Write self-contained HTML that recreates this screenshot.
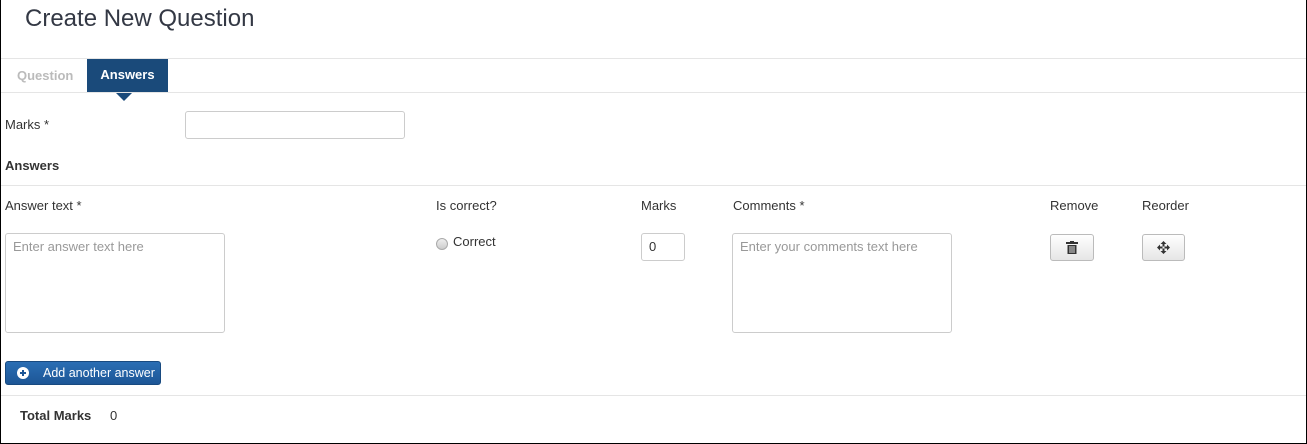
<!DOCTYPE html>
<html><head><style>
*{box-sizing:border-box;margin:0;padding:0}
body{width:1307px;height:444px;overflow:hidden;font-family:"Liberation Sans",sans-serif;color:#333;background:#fff}
.frame{position:absolute;left:0;top:0;width:1307px;height:444px;border:1px solid #000;border-top:none}
.a{position:absolute}
.hr{position:absolute;left:1px;right:1px;height:1px;background:#e5e5e5}
.t{font-size:13px}
.inp{position:absolute;border:1px solid #ccc;border-radius:3px;background:#fff}
.ph{color:#999;font-size:13px;position:absolute;left:7px;top:5px}
.btn{position:absolute;border:1px solid #bbb;border-radius:3px;background:linear-gradient(#fff,#e6e6e6);height:27px}
</style></head><body>
<div class="frame"></div>
<div class="a" style="left:25px;top:5px;font-size:24px;color:#333844">Create New Question</div>
<div class="hr" style="top:58px"></div>
<div class="a" style="left:17px;top:68px;font-size:13px;font-weight:bold;color:#bbb">Question</div>
<div class="a" style="left:87px;top:59px;width:81px;height:34px;background:#1a4a7a;color:#fff;font-weight:bold;font-size:13px;text-align:center;line-height:32px">Answers</div>
<div class="a" style="left:116px;top:93px;width:0;height:0;border-left:8px solid transparent;border-right:8px solid transparent;border-top:8px solid #1a4a7a"></div>
<div class="hr" style="top:92px"></div>
<div class="a t" style="left:5px;top:117px">Marks *</div>
<div class="inp" style="left:185px;top:111px;width:220px;height:28px"></div>
<div class="a t" style="left:5px;top:158px;font-weight:bold">Answers</div>
<div class="hr" style="top:185px"></div>
<div class="a t" style="left:5px;top:198px">Answer text *</div>
<div class="a t" style="left:436px;top:198px">Is correct?</div>
<div class="a t" style="left:641px;top:198px">Marks</div>
<div class="a t" style="left:733px;top:198px">Comments *</div>
<div class="a t" style="left:1050px;top:198px">Remove</div>
<div class="a t" style="left:1142px;top:198px">Reorder</div>
<div class="inp" style="left:5px;top:233px;width:220px;height:100px"><span class="ph">Enter answer text here</span></div>
<div class="a" style="left:436px;top:238px;width:12px;height:12px;border:1px solid #aaa;border-radius:50%;background:linear-gradient(#eee,#ccc)"></div>
<div class="a t" style="left:453px;top:234px">Correct</div>
<div class="inp" style="left:641px;top:233px;width:44px;height:28px"><span class="ph" style="color:#333;left:7px">0</span></div>
<div class="inp" style="left:732px;top:233px;width:220px;height:100px"><span class="ph">Enter your comments text here</span></div>
<div class="btn" style="left:1050px;top:234px;width:44px">
<svg class="a" style="left:15px;top:6px" width="12" height="13" viewBox="0 0 12 13"><rect x="0" y="1" width="12" height="2" fill="#333"/><rect x="4" y="0" width="4" height="2" fill="#333"/><path d="M1.5 4h9v9h-9z" fill="#333"/><path d="M4 5v7M6 5v7M8 5v7" stroke="#ddd" stroke-width="1"/></svg></div>
<div class="btn" style="left:1142px;top:234px;width:43px">
<svg class="a" style="left:14px;top:6px" width="13" height="13" viewBox="0 0 13 13" fill="#333"><path d="M6.5 0l3 3h-2v2.5h-2V3h-2zM6.5 13l3-3h-2V7.5h-2V10h-2zM0 6.5l3-3v2h2.5v2H3v2zM13 6.5l-3-3v2H7.5v2H10v2z"/></svg></div>
<div class="a" style="left:5px;top:361px;width:156px;height:24px;border-radius:3px;background:linear-gradient(#2a6eb4,#1d5696);border:1px solid #184a80;color:#fff;font-size:12.5px">
<svg class="a" style="left:11px;top:5px" width="12" height="12" viewBox="0 0 12 12"><circle cx="6" cy="6" r="6" fill="#fff"/><path d="M6 3v6M3 6h6" stroke="#1d5696" stroke-width="2"/></svg>
<span class="a" style="left:37px;top:4px">Add another answer</span></div>
<div class="hr" style="top:395px"></div>
<div class="a t" style="left:20px;top:408px;font-weight:bold">Total Marks</div>
<div class="a t" style="left:110px;top:408px">0</div>
</body></html>
